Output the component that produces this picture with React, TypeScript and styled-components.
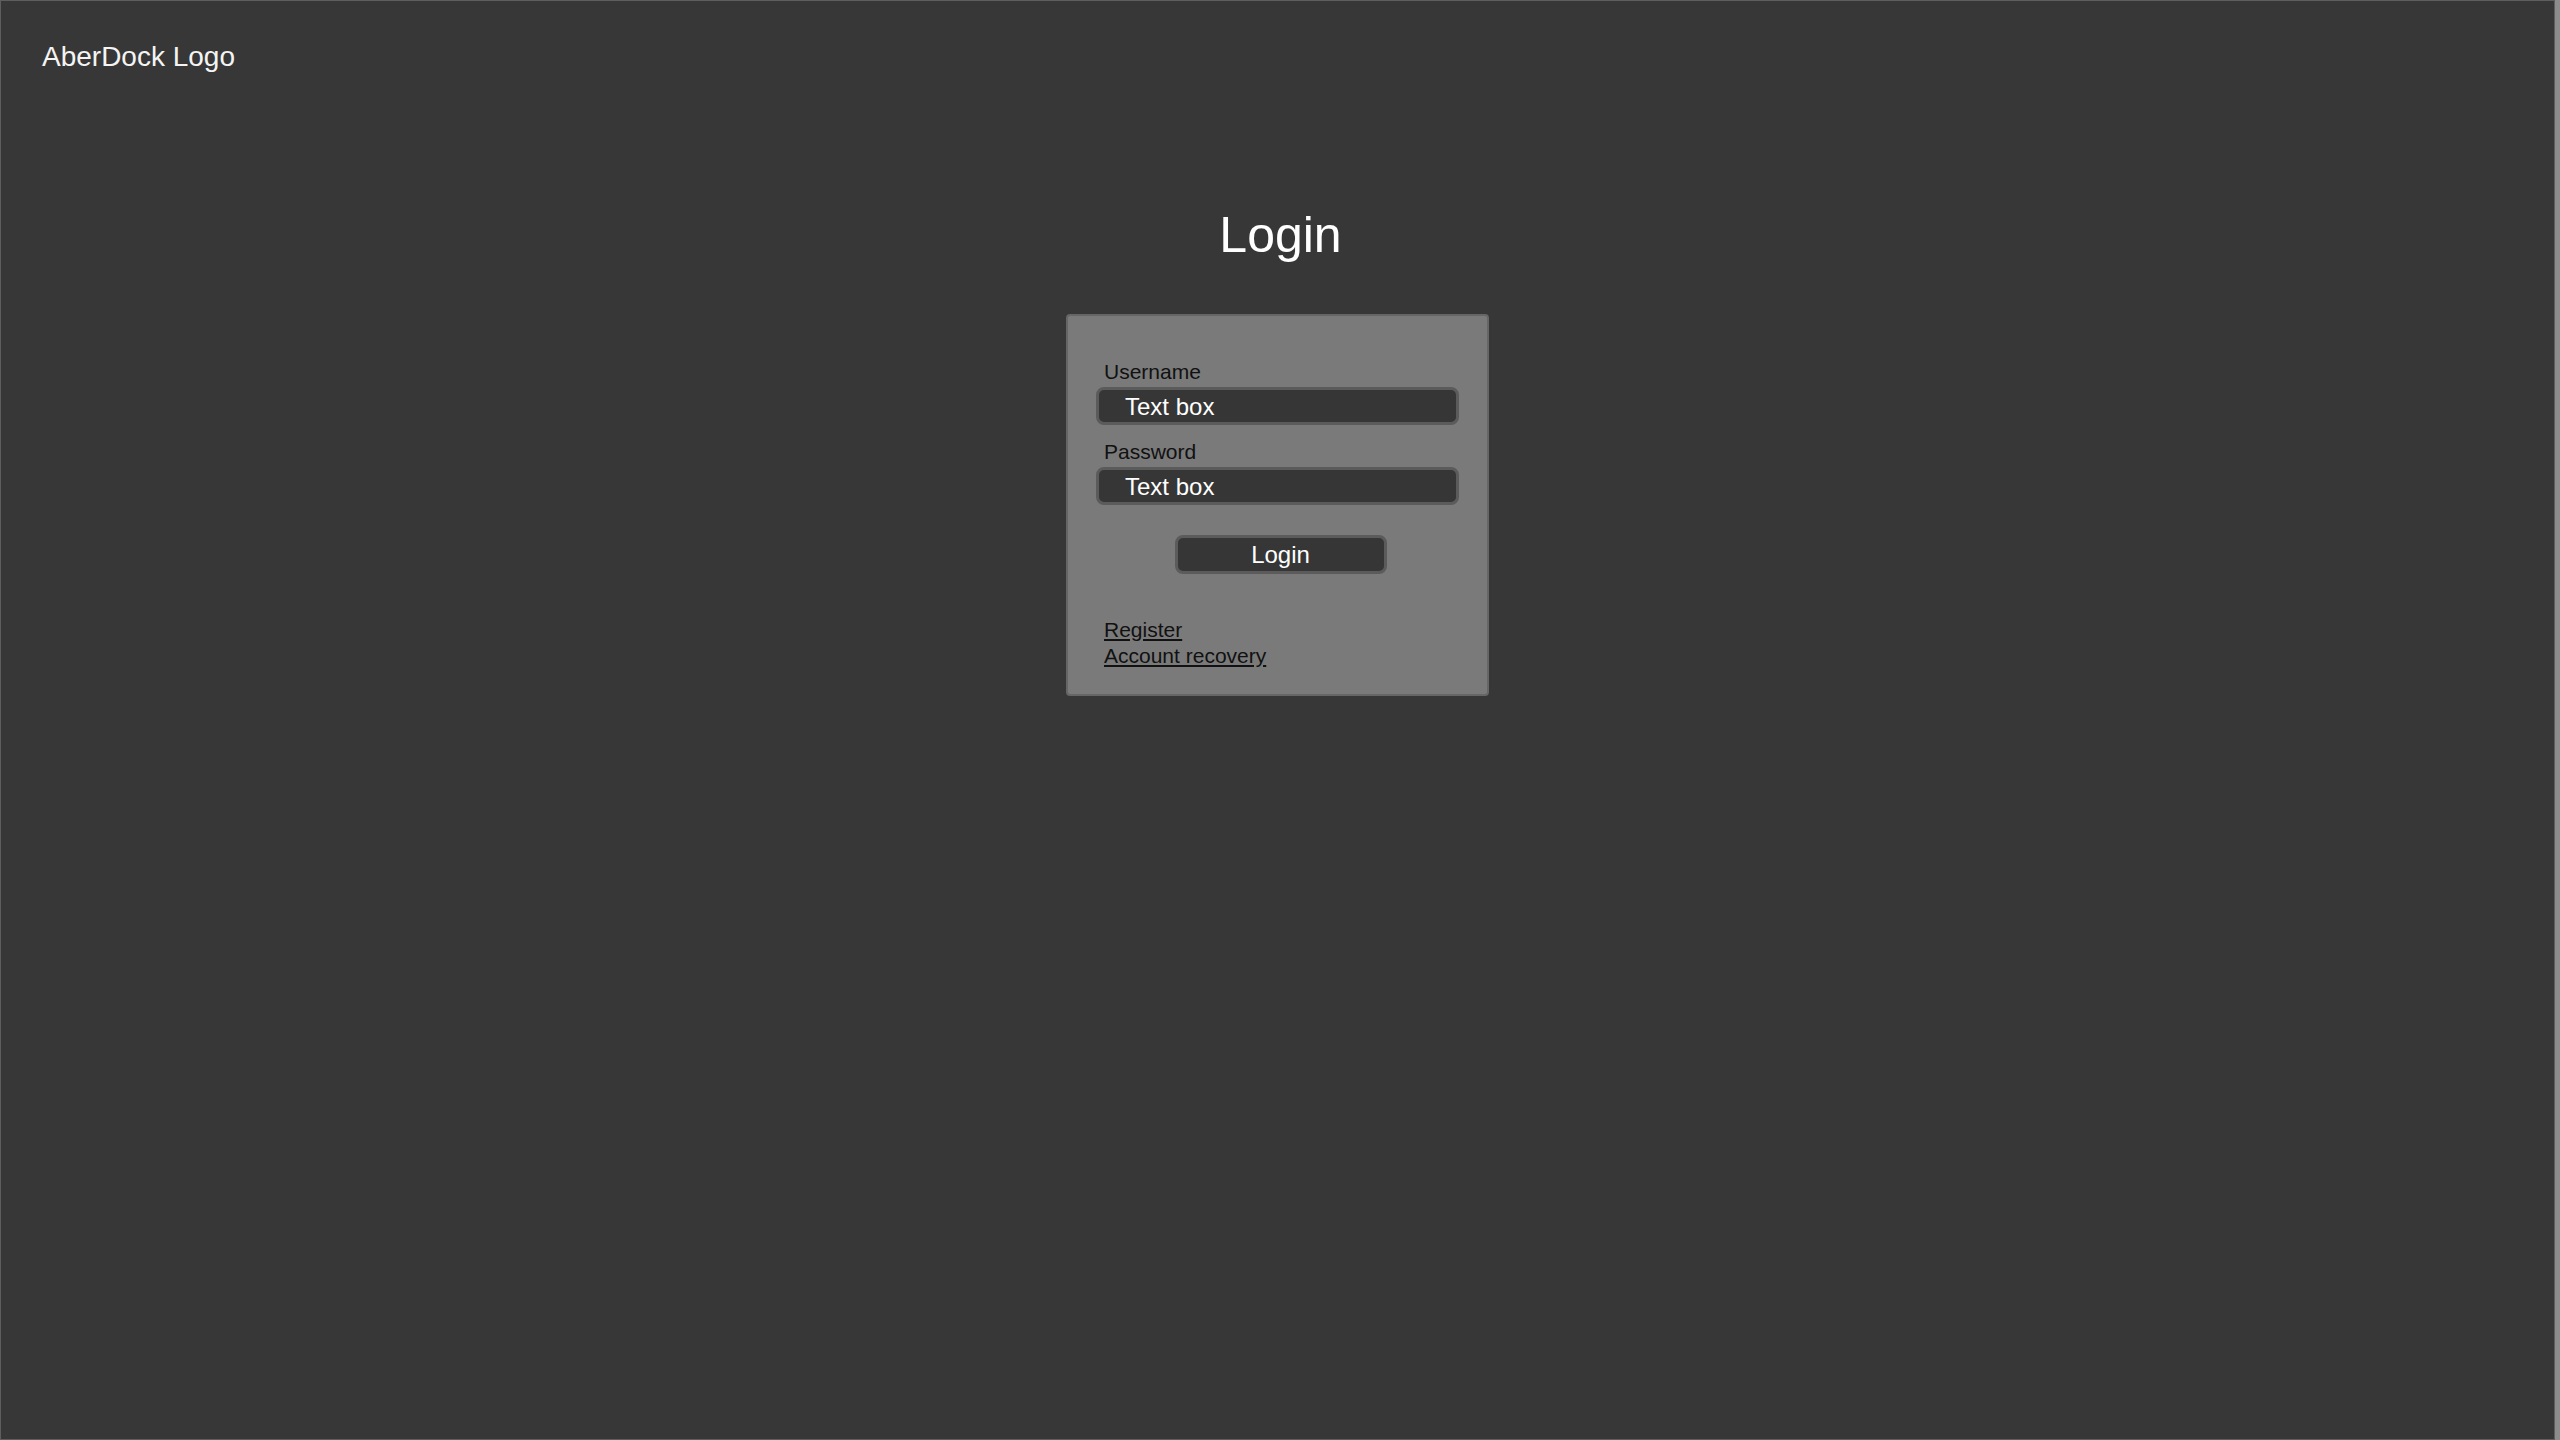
import styled, { createGlobalStyle } from 'styled-components';

const GlobalStyle = createGlobalStyle`
  html, body {
    margin: 0;
    padding: 0;
    background: #8c8c8c;
  }
  body {
    font-family: 'Liberation Sans', Arial, sans-serif;
  }
`;

function App() {
  return (
    <>
      <GlobalStyle />
      <Page>
        <Header>
          <Logo>AberDock Logo</Logo>
        </Header>
        <Main>
          <Title>Login</Title>
          <Card>
            <Field>
              <Label>Username</Label>
              <TextBox>Text box</TextBox>
            </Field>
            <Field>
              <Label>Password</Label>
              <TextBox>Text box</TextBox>
            </Field>
            <ButtonRow>
              <LoginButton>Login</LoginButton>
            </ButtonRow>
            <Links>
              <LinkText href="#">Register</LinkText>
              <LinkText href="#">Account recovery</LinkText>
            </Links>
          </Card>
        </Main>
      </Page>
    </>
  );
}

export default App;

const Page = styled.div`
  box-sizing: border-box;
  width: 2555px;
  height: 1440px;
  background: #373737;
  border: 1px solid #5e5e5e;
  display: flex;
  flex-direction: column;
`;

const Header = styled.div`
  padding: 38px 0 0 41px;
`;

const Logo = styled.div`
  font-size: 28px;
  line-height: 36px;
  color: #f4f4f4;
`;

const Main = styled.div`
  display: flex;
  flex-direction: column;
  align-items: center;
`;

const Title = styled.h1`
  margin: 130px 0 0;
  font-size: 50px;
  font-weight: 400;
  line-height: 60px;
  color: #ffffff;
  transform: translateX(3px);
`;

const Card = styled.div`
  box-sizing: border-box;
  width: 423px;
  margin-top: 49px;
  padding: 44px 28px 25px;
  background: #7a7a7a;
  border: 2px solid #666666;
  border-radius: 4px;
  display: flex;
  flex-direction: column;
`;

const Field = styled.div`
  display: flex;
  flex-direction: column;
  gap: 3px;
  margin-bottom: 15px;
`;

const Label = styled.div`
  padding-left: 8px;
  font-size: 21px;
  line-height: 24px;
  color: #111111;
`;

const TextBox = styled.div`
  box-sizing: border-box;
  height: 38px;
  padding: 1px 0 0 26px;
  background: #363636;
  border: 3px solid #5b5b5b;
  border-radius: 8px;
  font-size: 24px;
  line-height: 32px;
  color: #ffffff;
`;

const ButtonRow = styled.div`
  display: flex;
  justify-content: center;
  margin-top: 15px;
`;

const LoginButton = styled.button`
  box-sizing: border-box;
  width: 212px;
  height: 39px;
  padding: 0;
  background: #363636;
  border: 3px solid #5b5b5b;
  border-radius: 8px;
  font-family: 'Liberation Sans', Arial, sans-serif;
  font-size: 24px;
  line-height: 33px;
  color: #ffffff;
  transform: translateX(3px);
  cursor: pointer;
`;

const Links = styled.div`
  display: flex;
  flex-direction: column;
  align-items: flex-start;
  margin-top: 43px;
  padding-left: 8px;
`;

const LinkText = styled.a`
  font-size: 21px;
  line-height: 26px;
  color: #111111;
  text-decoration: underline;
`;
